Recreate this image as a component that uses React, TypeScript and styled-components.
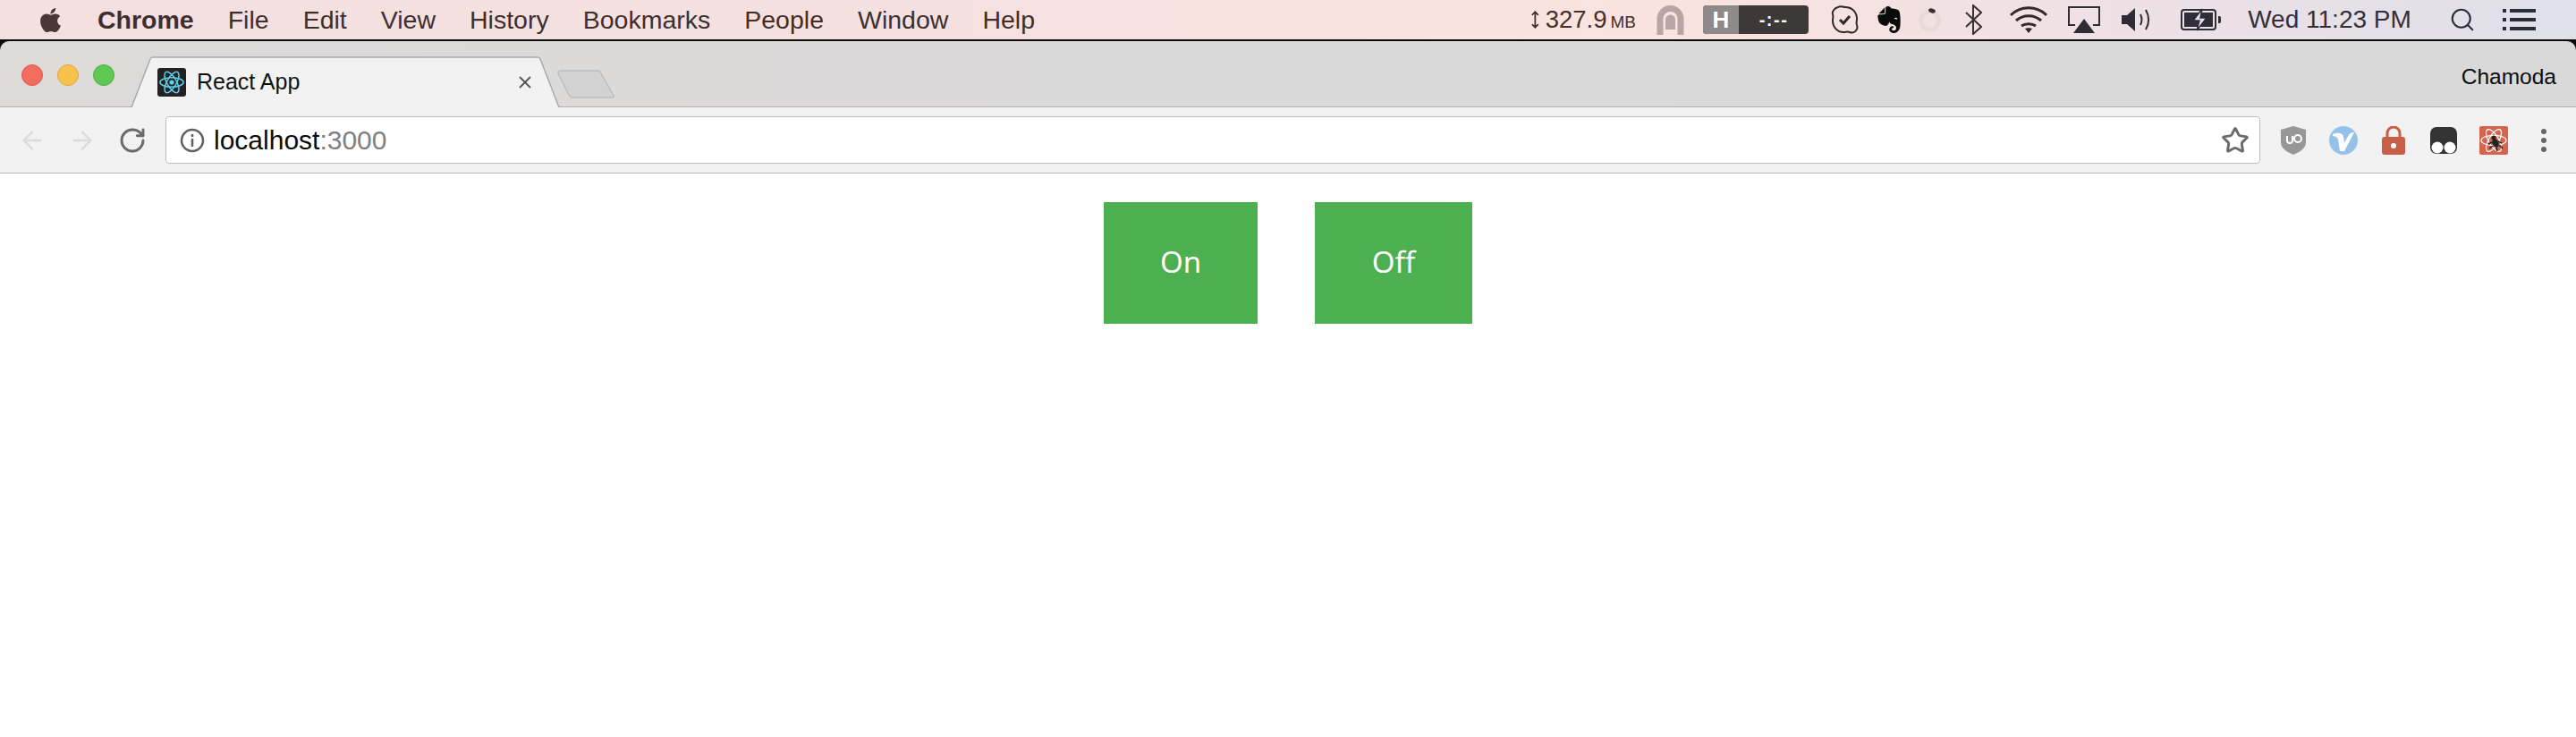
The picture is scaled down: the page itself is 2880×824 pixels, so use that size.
import React from "react";
import styled, { createGlobalStyle } from "styled-components";
import { FaApple, FaEvernote } from "react-icons/fa";
import { ArrowLeft, ArrowRight, RotateCw, Search, Star, X } from "lucide-react";

const GlobalStyle = createGlobalStyle`
	html, body {
		margin: 0;
		padding: 0;
		background: #fff;
		font-family: "Liberation Sans", Arial, sans-serif;
	}
`;

const Page = styled.div`
	width: 2880px;
	height: 824px;
	overflow: hidden;
	background: #fff;
`;

const MenuBar = styled.div`
	display: flex;
	align-items: center;
	height: 44px;
	padding: 0 45px 0 41px;
	background: linear-gradient(90deg, #f4e0e0 0%, #f6e1e0 45%, #fbe3df 62%, #f0e1e4 80%, #dfe0ea 100%);
	color: #3e2f2f;
	font-size: 28.5px;
	white-space: nowrap;
`;

const MenuList = styled.div`
	display: flex;
	align-items: center;
	gap: 38px;
	margin-left: 37px;
`;

const MenuItem = styled.span<{ $bold?: boolean }>`
	font-weight: ${(p) => (p.$bold ? 700 : 400)};
`;

const StatusList = styled.div`
	display: flex;
	align-items: center;
	margin-left: auto;
	height: 44px;
`;

const Slot = styled.div<{ $w: number; $ml: number }>`
	display: flex;
	align-items: center;
	justify-content: center;
	flex: none;
	width: ${(p) => p.$w}px;
	margin-left: ${(p) => p.$ml}px;
	height: 44px;
`;

const Memory = styled.span`
	font-size: 27.5px;
	color: #43302e;
	margin-left: 7px;
	small {
		font-size: 19px;
		margin-left: 4px;
	}
`;

const Hours = styled.div`
	display: flex;
	width: 100%;
	height: 32px;
	border-radius: 4px;
	overflow: hidden;
	background: #3d3938;
	color: #fff;
	font-size: 20px;
	font-weight: 700;
`;

const HoursBadge = styled.span`
	display: flex;
	align-items: center;
	justify-content: center;
	width: 40px;
	background: #8e8a89;
	font-size: 26px;
`;

const HoursTime = styled.span`
	flex: 1;
	display: flex;
	align-items: center;
	justify-content: center;
	letter-spacing: 1.5px;
`;

const Clock = styled.span`
	font-size: 28px;
	color: #33303c;
`;

const Frame = styled.div`
	background: #0d0a0a;
	padding-top: 2px;
`;

const TabStrip = styled.div`
	display: flex;
	align-items: flex-end;
	height: 73px;
	padding-left: 144px;
	padding-right: 22px;
	border-bottom: 1px solid #b3b3b3;
	border-radius: 10px 10px 0 0;
	background: linear-gradient(90deg, #dddbda 0%, #d9d9d9 100%);
	position: relative;
`;

const Lights = styled.div`
	position: absolute;
	left: 24px;
	top: 26px;
	display: flex;
	gap: 16px;
`;

const Light = styled.span<{ $fill: string; $edge: string }>`
	width: 24px;
	height: 24px;
	box-sizing: border-box;
	border-radius: 50%;
	background: ${(p) => p.$fill};
	border: 1px solid ${(p) => p.$edge};
`;

const Tab = styled.div`
	position: relative;
	display: flex;
	align-items: center;
	flex: none;
	width: 484px;
	height: 57px;
	margin-bottom: -1px;
	padding: 0 30px 0 32px;
	box-sizing: border-box;
	font-size: 25px;
	color: #111;
`;

const TabShape = styled.svg`
	position: absolute;
	left: 0;
	top: 0;
`;

const TabContent = styled.div`
	position: relative;
	display: flex;
	align-items: center;
	width: 100%;
	height: 100%;
	box-sizing: border-box;
`;

const TabTitle = styled.span`
	margin-left: 12px;
	flex: 1;
`;

const NewTab = styled.svg`
	flex: none;
	margin: 0 0 9px -5px;
`;

const Profile = styled.span`
	position: absolute;
	right: 22px;
	top: 26px;
	font-size: 24.5px;
	color: #0c0c0c;
`;

const Toolbar = styled.div`
	display: flex;
	align-items: center;
	height: 73px;
	padding: 0 14px 0 20px;
	background: #f2f2f2;
	border-bottom: 1px solid #b8b8b8;
`;

const NavButtons = styled.div`
	display: flex;
	gap: 24px;
	margin-right: 21px;
`;

const NavButton = styled.span<{ $color: string }>`
	display: flex;
	align-items: center;
	justify-content: center;
	width: 32px;
	height: 32px;
	color: ${(p) => p.$color};
`;

const AddressBar = styled.div`
	flex: 1;
	display: flex;
	align-items: center;
	height: 53px;
	padding: 0 11px 0 15px;
	box-sizing: border-box;
	background: #fff;
	border: 1px solid #bcbcbc;
	border-radius: 4px;
	font-size: 30px;
`;

const Url = styled.span`
	flex: 1;
	margin-left: 10px;
	color: #0a0a0a;
	span {
		color: #808080;
	}
`;

const Extensions = styled.div`
	display: flex;
	gap: 12px;
	margin-left: 15px;
`;

const Extension = styled.span`
	display: flex;
	align-items: center;
	justify-content: center;
	width: 44px;
	height: 44px;
`;

const Content = styled.main`
	display: flex;
	justify-content: center;
	gap: 64px;
	padding-top: 32px;
`;

const Button = styled.button<{ $w: number }>`
	width: ${(p) => p.$w}px;
	height: 136px;
	padding: 0 0 3px;
	border: none;
	background: #4caf50;
	color: #fff;
	font-family: "Noto Sans", "Open Sans", sans-serif;
	font-size: 33px;
	cursor: pointer;
`;

const Atom: React.FC<{ size: number; color: string; width?: number }> = ({ size, color, width = 1.6 }) => (
	<svg width={size} height={size} viewBox="-16 -16 32 32" fill="none" stroke={color} strokeWidth={width}>
		<ellipse rx="14" ry="5.6" />
		<ellipse rx="14" ry="5.6" transform="rotate(60)" />
		<ellipse rx="14" ry="5.6" transform="rotate(120)" />
		<circle r="2.8" fill={color} stroke="none" />
	</svg>
);

const Favicon = styled.span`
	display: flex;
	align-items: center;
	justify-content: center;
	flex: none;
	width: 32px;
	height: 32px;
	border-radius: 3px;
	background: #222;
`;

const App: React.FC = () => {
	return (
		<Page>
			<GlobalStyle />
			<MenuBar>
				<FaApple size={31} color="#4a3736" />
				<MenuList>
					<MenuItem $bold>Chrome</MenuItem>
					{["File", "Edit", "View", "History", "Bookmarks", "People", "Window", "Help"].map((item) => (
						<MenuItem key={item}>{item}</MenuItem>
					))}
				</MenuList>
				<StatusList>
					<Slot $w={117} $ml={0}>
						<svg width="10" height="22" viewBox="0 0 10 22" fill="none" stroke="#43302e" strokeWidth="2">
							<path d="M5 1v20M1 5l4-4 4 4M1 17l4 4 4-4" />
						</svg>
						<Memory>
							327.9<small>MB</small>
						</Memory>
					</Slot>
					<Slot $w={33} $ml={22}>
						<svg width="33" height="36" viewBox="0 0 33 36" fill="none" stroke="#b9a5a5">
							<path d="M5 35V17a11.500 11.500 0 0 1 23 0v18" strokeWidth="7" />
							<path d="M11 29V18a5.500 5.500 0 0 1 11 0v11z" fill="#b9a5a5" stroke="none" />
						</svg>
					</Slot>
					<Slot $w={118} $ml={20}>
						<Hours>
							<HoursBadge>H</HoursBadge>
							<HoursTime>-:--</HoursTime>
						</Hours>
					</Slot>
					<Slot $w={31} $ml={25}>
						<svg width="31" height="34" viewBox="0 0 31 34" fill="none" stroke="#2f2a2a" strokeWidth="2">
							<path d="M8 3c3-2 5 0 8 0 8 0 13 6 13 13 0 3-1 4 0 7 2 5-3 10-8 8-3-1-4 0-7 0C7 31 2 25 2 18c0-3 1-4 0-7-1-3 2-7 6-8z" />
							<path d="M10 17l4 4 7-8" strokeWidth="3" />
						</svg>
					</Slot>
					<Slot $w={30} $ml={19}>
						<FaEvernote size={34} color="#0a0a0a" />
					</Slot>
					<Slot $w={25} $ml={18}>
						<svg width="25" height="28" viewBox="0 0 25 28" fill="none">
							<circle cx="12.500" cy="15" r="10" stroke="#e8dad8" strokeWidth="5" />
							<ellipse cx="15" cy="4" rx="4" ry="2.500" fill="#3a3030" transform="rotate(20 15 4)" />
						</svg>
					</Slot>
					<Slot $w={19} $ml={27}>
						<svg width="19" height="34" viewBox="0 0 19 34" fill="none" stroke="#3a3030" strokeWidth="2">
							<path d="M1 9l17 16-9 8V1l9 8L1 25" />
						</svg>
					</Slot>
					<Slot $w={44} $ml={30}>
						<svg width="44" height="32" viewBox="0 0 44 32" fill="none" stroke="#33292c" strokeWidth="3">
							<path d="M2 11c11-11 29-11 40 0M8 17c8-7 20-7 28 0M14 23c4-3 12-3 16 0" />
							<path d="M22 31l-4-5c2-1 6-1 8 0z" fill="#33292c" stroke="none" />
						</svg>
					</Slot>
					<Slot $w={36} $ml={22}>
						<svg width="36" height="30" viewBox="0 0 36 30" fill="none">
							<path d="M8 21H1V1h34v20h-7" stroke="#2f2c33" strokeWidth="2" />
							<path d="M18 14l12 16H6z" fill="#2f2c33" />
						</svg>
					</Slot>
					<Slot $w={33} $ml={24}>
						<svg width="33" height="28" viewBox="0 0 33 28" fill="none">
							<path d="M0 9h6l9-8v26l-9-8H0z" fill="#2f2c35" />
							<path d="M21 8c2 4 2 8 0 12M27 3c4 7 4 15 0 22" stroke="#2f2c35" strokeWidth="2" />
						</svg>
					</Slot>
					<Slot $w={45} $ml={33}>
						<svg width="45" height="26" viewBox="0 0 45 26" fill="none">
							<rect x="1" y="2" width="38" height="22" rx="3" stroke="#2f2d38" strokeWidth="2" />
							<rect x="4" y="5" width="32" height="16" fill="#2f2d38" />
							<path d="M42 9h1.500c1 0 1.500 1 1.500 2v4c0 1-.5 2-1.500 2H42z" fill="#2f2d38" />
							<path d="M24 1l-10 13h7l-3 11 11-14h-7z" fill="#e6e1ea" stroke="#2f2d38" strokeWidth="1.500" />
						</svg>
					</Slot>
					<Slot $w={181} $ml={31}>
						<Clock>Wed 11:23 PM</Clock>
					</Slot>
					<Slot $w={30} $ml={43}>
						<Search size={34} color="#2f2e3a" strokeWidth={1.7} />
					</Slot>
					<Slot $w={37} $ml={30}>
						<svg width="37" height="24" viewBox="0 0 37 24" fill="#2b2c3a">
							<rect x="0" y="0" width="4" height="4" />
							<rect x="8" y="0" width="29" height="4" />
							<rect x="0" y="10" width="4" height="4" />
							<rect x="8" y="10" width="29" height="4" />
							<rect x="0" y="20" width="4" height="4" />
							<rect x="8" y="20" width="29" height="4" />
						</svg>
					</Slot>
				</StatusList>
			</MenuBar>
			<Frame>
				<TabStrip>
					<Lights>
						<Light $fill="#f26d60" $edge="#e0564a" />
						<Light $fill="#f8c14b" $edge="#e0a63a" />
						<Light $fill="#5ec854" $edge="#4cae43" />
					</Lights>
					<Tab>
						<TabShape width="484" height="57" viewBox="0 0 484 57" fill="none">
							<path d="M0 57h3L24 3c.500-1.500 1.500-2 3-2h430c1.500 0 2.500.5 3 2l21 54h3" fill="#f2f2f2" stroke="#aaa" strokeWidth="1.500" />
						</TabShape>
						<TabContent>
							<Favicon>
								<Atom size={30} color="#5ccfee" />
							</Favicon>
							<TabTitle>React App</TabTitle>
							<X size={22} color="#555" strokeWidth={2} />
						</TabContent>
					</Tab>
					<NewTab width="64" height="32" viewBox="0 0 64 32" fill="#d2d2d2" stroke="#bdbdbd" strokeWidth="1.500">
						<path d="M5 1h40c2 0 3 1 4 3l14 25c.5 1.500 0 2-1.500 2H17c-2 0-3-1-4-3L1 4c-.5-2 2-3 4-3z" />
					</NewTab>
					<Profile>Chamoda</Profile>
				</TabStrip>
				<Toolbar>
					<NavButtons>
						<NavButton $color="#dcdcdc">
							<ArrowLeft size={38} strokeWidth={2} />
						</NavButton>
						<NavButton $color="#dcdcdc">
							<ArrowRight size={38} strokeWidth={2} />
						</NavButton>
						<NavButton $color="#6a6a6a">
							<RotateCw size={32} strokeWidth={2.2} />
						</NavButton>
					</NavButtons>
					<AddressBar>
						<svg width="28" height="28" viewBox="0 0 28 28" fill="none" stroke="#606060">
							<circle cx="14" cy="14" r="12" strokeWidth="2.500" />
							<path d="M14 12v9M14 7v3" strokeWidth="2.500" />
						</svg>
						<Url>
							localhost<span>:3000</span>
						</Url>
						<Star size={32} color="#6a6a6a" strokeWidth={2.2} />
					</AddressBar>
					<Extensions>
						<Extension>
							<svg width="28" height="32" viewBox="0 0 28 32">
								<path d="M14 0l14 4v14c0 7-7 11-14 14C7 29 0 25 0 18V4z" fill="#979797" />
								<path d="M7 11v5a3 3 0 0 0 6 0v-5M15 14a4 4 0 1 0 8 0a4 4 0 1 0-8 0" fill="none" stroke="#fff" strokeWidth="2" />
							</svg>
						</Extension>
						<Extension>
							<svg width="32" height="32" viewBox="0 0 32 32">
								<circle cx="16" cy="16" r="16" fill="#95c2e8" />
								<path d="M4 9c5-2 11-2 12 3l1 7 5-9c1-2 3-3 6-3L17 28h-5l-2-13c-1-3-3-4-6-4z" fill="#fff" />
							</svg>
						</Extension>
						<Extension>
							<svg width="26" height="32" viewBox="0 0 26 32">
								<path d="M6 14V8a7 7 0 0 1 14 0v6" fill="none" stroke="#c95e49" strokeWidth="3" />
								<rect x="0" y="12" width="26" height="20" rx="3" fill="#c95e49" />
								<circle cx="13" cy="22" r="3" fill="#fff" />
							</svg>
						</Extension>
						<Extension>
							<svg width="30" height="30" viewBox="0 0 30 30">
								<rect width="30" height="30" rx="7" fill="#333" />
								<circle cx="8" cy="23" r="6.500" fill="#fff" />
								<circle cx="22" cy="23" r="6.500" fill="#fff" />
							</svg>
						</Extension>
						<Extension>
							<svg width="32" height="32" viewBox="-16 -16 32 32" fill="none" stroke="#fff" strokeWidth="1.200">
								<rect x="-16" y="-16" width="32" height="32" rx="2" fill="#d6654f" stroke="none" />
								<ellipse rx="14" ry="5.600" />
								<ellipse rx="14" ry="5.600" transform="rotate(60)" />
								<ellipse rx="14" ry="5.600" transform="rotate(120)" />
								<ellipse cx="2" cy="3" rx="3.500" ry="5" fill="#222" stroke="none" transform="rotate(-25 2 3)" />
								<circle cx="0" cy="-3" r="2.500" fill="#222" stroke="none" />
								<path d="M-2 2l-4 2M-1 6l-4 3M5 1l4 2M6 5l4 4M3 8l1 4" stroke="#222" strokeWidth="1.500" />
							</svg>
						</Extension>
						<Extension>
							<svg width="8" height="28" viewBox="0 0 8 28" fill="#666">
								<circle cx="4" cy="4" r="3" />
								<circle cx="4" cy="14" r="3" />
								<circle cx="4" cy="24" r="3" />
							</svg>
						</Extension>
					</Extensions>
				</Toolbar>
			</Frame>
			<Content>
				<Button $w={172}>On</Button>
				<Button $w={176}>Off</Button>
			</Content>
		</Page>
	);
};

export default App;
